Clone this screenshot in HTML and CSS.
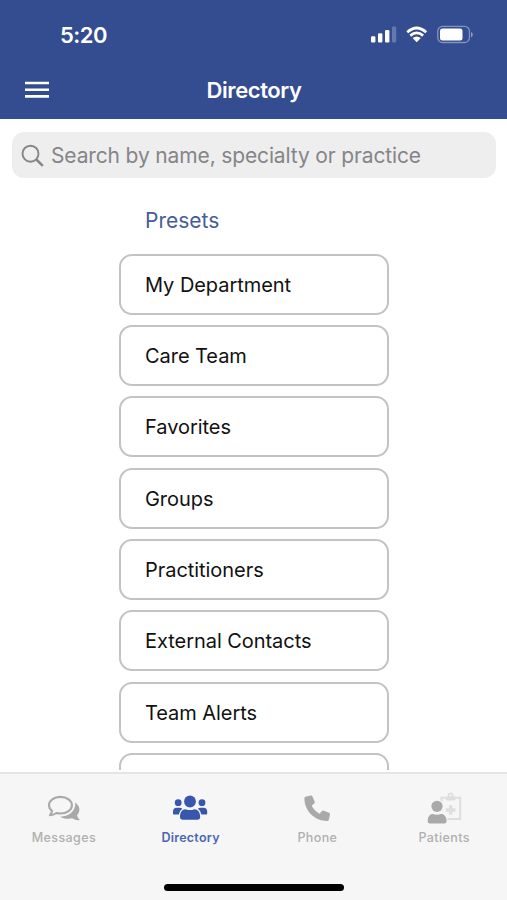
FILE: index.html
```html
<!DOCTYPE html>
<html lang="en">
<head>
<meta charset="utf-8">
<title>Directory</title>
<link rel="stylesheet" href="styles.css">
</head>
<body>
<div class="app">
  <header class="header">
    <div class="status">
      <span class="time">5:20</span>
      <svg class="status-icons" width="104" height="20" viewBox="370 25 104 20">
        <g fill="#fff">
          <rect x="371" y="36.300" width="4.400" height="6.200" rx="1.200"/>
          <rect x="378" y="33.300" width="4.400" height="9.200" rx="1.200"/>
          <rect x="385" y="30" width="4.400" height="12.500" rx="1.200"/>
          <rect x="392" y="26.500" width="4.200" height="16" rx="1.200" opacity=".25"/>
          <path d="M412.600 38.100Q416.700 34.900 420.800 38.100L416.700 42.300Z"/>
          <rect x="440" y="28.500" width="22.500" height="12" rx="2.500"/>
        </g>
        <g fill="none" stroke="#fff">
          <path d="M407.200 32.200Q416.700 23.800 426.200 32.200M410.300 35.600Q416.700 30.200 423.100 35.600" stroke-width="2.700"/>
          <rect x="437.800" y="26.300" width="31.600" height="16.200" rx="4.800" stroke-width="1.300" opacity=".4"/>
        </g>
        <path d="M471 32v5.400q1.800-.8 1.800-2.700T471 32Z" fill="#fff" opacity=".45"/>
      </svg>
    </div>
    <div class="titlebar">
      <svg width="24" height="18" viewBox="0 0 24 18"><path d="M0 2h24M0 8.700h24M0 15.400h24" stroke="#fff" stroke-width="2.600"/></svg>
      <h1 class="title">Directory</h1>
    </div>
  </header>

  <div class="search">
    <svg width="24" height="24" viewBox="0 0 24 24" fill="none" stroke="#85858a"><circle cx="9.500" cy="9.700" r="8" stroke-width="1.900"/><path d="M15.300 15.500l6.500 6.300" stroke-width="2.500"/></svg>
    <span class="placeholder">Search by name, specialty or practice</span>
  </div>

  <main class="list">
    <h2 class="presets">Presets</h2>
    <div class="card">My Department</div>
    <div class="card">Care Team</div>
    <div class="card">Favorites</div>
    <div class="card">Groups</div>
    <div class="card">Practitioners</div>
    <div class="card">External Contacts</div>
    <div class="card">Team Alerts</div>
    <div class="card"></div>
  </main>

  <footer class="footer">
    <nav class="tabs">
      <div class="tab">
        <svg width="40" height="36" viewBox="43.300 790 40 36">
          <path d="M75.500 802.500C80.500 806 81 811.500 77.300 815.400Q78.200 818 80.200 820Q76 820.700 72.500 818.300C68 819.300 63.500 818.700 60.500 816.700C70 816.300 76.200 810.500 75.500 802.500Z" fill="#a9a9a9"/>
          <path d="M60.700 796.900C67.200 796.900 72.200 800.600 72.200 805.200S67.200 813.500 60.700 813.500Q58.700 813.500 56.800 813Q53.700 815.200 50.300 815.200Q51.800 813.300 52.300 810.700C50.300 809.100 49.300 807.200 49.300 805.200C49.300 800.600 54.200 796.900 60.700 796.900Z" fill="none" stroke="#a9a9a9" stroke-width="2.100" stroke-linejoin="round"/>
        </svg>
        <span class="label">Messages</span>
      </div>
      <div class="tab active">
        <svg width="40" height="36" viewBox="170 790 40 36" fill="#3856ae">
          <circle cx="190" cy="801.500" r="5.900"/>
          <circle cx="178.200" cy="802.700" r="3.400"/>
          <circle cx="202" cy="802.700" r="3.400"/>
          <path d="M180 817.300C180 812 182.300 809.200 185.600 809.200Q190 811 194.400 809.200C197.700 809.200 200.200 812 200.200 817.300Q200.200 819.700 197.800 819.700H182.400Q180 819.700 180 817.300Z"/>
          <path d="M173 813.800V811.500Q173 807.700 176.800 807.700H179.500Q181.300 807.700 182.300 808.800Q179.400 810.700 178.800 814.600H174Q173 814.600 173 813.800ZM207.200 813.800V811.500Q207.200 807.700 203.400 807.700H200.700Q198.900 807.700 197.900 808.800Q200.800 810.700 201.400 814.600H206.200Q207.200 814.600 207.200 813.800Z"/>
        </svg>
        <span class="label">Directory</span>
      </div>
      <div class="tab">
        <svg width="40" height="36" viewBox="297 790 40 36"><path d="M305.500 796.700L310.700 795.600Q312 795.400 312.500 796.600L314.700 801.700Q315.100 802.800 314.200 803.600L311.700 805.700Q314.300 811 319.700 813.700L321.900 811.100Q322.700 810.200 323.800 810.700L329 812.800Q330.200 813.400 330 814.600L328.800 819.800Q328.500 821 327.200 821C314.500 821 304.400 811 304.400 798.100Q304.400 797 305.500 796.700Z" fill="#a9a9a9"/></svg>
        <span class="label">Phone</span>
      </div>
      <div class="tab">
        <svg width="40" height="36" viewBox="423.500 790 40 36">
          <g fill="none" stroke="#dedede"><path d="M445 797.800H440.900V819.100H459.700V797.800H455.600" stroke-width="2"/><path d="M450.200 805.200v9.600M445.400 810h9.600" stroke-width="3.400"/><circle cx="450.200" cy="795.500" r="2.100" stroke-width="1.800"/></g>
          <path d="M445 796.500h10.400v1.700q0 2.300-2.300 2.300h-5.800q-2.300 0-2.300-2.300Z" fill="#dedede"/>
          <circle cx="436.500" cy="806.300" r="6.700" fill="#f6f6f6"/>
          <path d="M425 824V814L431 811H442L447 816V824Z" fill="#f6f6f6"/>
          <g fill="#a9a9a9"><circle cx="436.500" cy="806.300" r="5.600"/><path d="M427.200 821.300C427.200 816.700 429.300 814 432.500 814Q436.500 815.600 440.500 814C443.700 814 446.100 816.700 446.100 821.300Q446.100 823.500 443.900 823.500H429.400Q427.200 823.500 427.200 821.300Z"/></g>
        </svg>
        <span class="label">Patients</span>
      </div>
    </nav>
    <div class="home"></div>
  </footer>
</div>
</body>
</html>
```
FILE: styles.css
```css
* { box-sizing: border-box; }
body { margin: 0; background: #fff; font-family: Inter, "Liberation Sans", sans-serif; }
.app { width: 507px; height: 900px; display: flex; flex-direction: column; overflow: hidden; }
.header { height: 119px; flex: none; background: #344c90; color: #fff; }
.status { height: 62px; padding: 8px 33px 0 60px; display: flex; justify-content: space-between; align-items: center; }
.time { font-size: 22px; line-height: 26px; font-weight: 600; letter-spacing: -.5px; }
.status-icons { margin-top: -1px; }
.titlebar { height: 57px; display: grid; grid-template-columns: 1fr auto 1fr; align-items: center; padding: 0 24px 1px 25px; }
.title { margin: 0; font-size: 22px; line-height: 28px; font-weight: 600; letter-spacing: -.4px; }
.search { height: 46px; flex: none; margin: 13px 11px 0 12px; padding: 2px 0 0 9px; border-radius: 12px; background: #eeeeef; display: flex; align-items: center; gap: 6px; color: #858588; }
.placeholder { font-size: 21px; line-height: 28px; letter-spacing: -.14px; white-space: nowrap; }
.list { height: 592px; flex: none; padding: 28px 118px 0 119px; overflow: hidden; display: flex; flex-direction: column; }
.presets { margin: 0 0 18.500px 26px; font-size: 21px; line-height: 29px; font-weight: 400; letter-spacing: 0; color: #455e97; }
.card { height: 61px; flex: none; margin-bottom: 10.350px; padding: 1px 0 0 24px; border: 2px solid #c3c3c3; border-radius: 13px; display: flex; align-items: center; font-size: 20px; letter-spacing: -.05px; color: #111; }
.footer { height: 128px; flex: none; margin-top: 2px; border-top: 2px solid #e5e5e5; background: #f6f6f6; display: flex; flex-direction: column; align-items: center; }
.tabs { width: 507px; height: 110px; display: grid; grid-template-columns: repeat(4, 1fr); padding-top: 16px; }
.tab { display: flex; flex-direction: column; align-items: center; color: #b0b0b0; }
.active { color: #4b66b3; }
.label { font-size: 12.500px; line-height: 16px; margin-top: 4px; font-weight: 500; letter-spacing: .4px; padding-left: 1px; }
.active .label { font-weight: 600; letter-spacing: .25px; }
.home { width: 180px; height: 7px; border-radius: 4px; background: #000; }
```
